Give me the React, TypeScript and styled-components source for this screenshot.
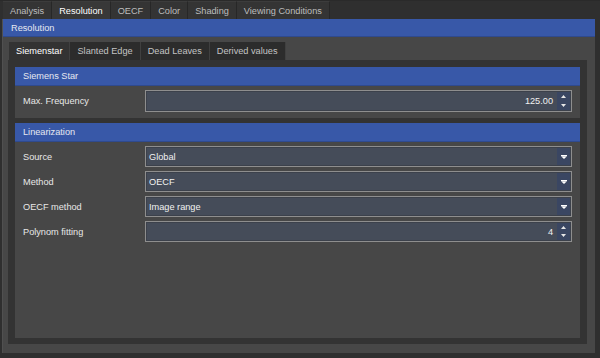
import React from 'react';
import styled, { createGlobalStyle } from 'styled-components';

const GlobalStyle = createGlobalStyle`
  html, body {
    margin: 0;
    padding: 0;
    background: #2f2f2f;
  }
  body {
    font-family: 'Liberation Sans', Arial, sans-serif;
    font-size: 9.2px;
    color: #dcdcdc;
  }
`;

const Window = styled.div`
  width: 600px;
  height: 358px;
  display: flex;
  flex-direction: column;
  background: #2f2f2f;
  overflow: hidden;
`;

const TopTabBar = styled.div`
  height: 19px;
  display: flex;
  align-items: flex-end;
  padding-left: 3px;
  border-top: 1px solid #2a2a2a;
  box-sizing: border-box;
`;

const TopTab = styled.div<{ $active?: boolean }>`
  height: 18px;
  padding: 0 7px;
  display: flex;
  align-items: center;
  box-sizing: border-box;
  background: ${(p) => (p.$active ? '#383838' : '#343434')};
  color: ${(p) => (p.$active ? '#ffffff' : '#bdbdbd')};
  border-right: 1px solid #272727;
  border-top: 1px solid #3c3c3c;
`;

const MainPanel = styled.div`
  flex: 1;
  margin: 0 5px 5px 2px;
  display: flex;
  flex-direction: column;
  background: #474747;
  border-left: 1px solid #505050;
`;

const BlueTitle = styled.div<{ $height: number; $indent: number }>`
  height: ${(p) => p.$height}px;
  flex-shrink: 0;
  display: flex;
  align-items: center;
  padding-left: ${(p) => p.$indent}px;
  background: #3858a8;
  color: #e6e8f0;
  border-bottom: 1px solid #2f4a8e;
  box-sizing: border-box;
`;

const PanelBody = styled.div`
  flex: 1;
  display: flex;
  flex-direction: column;
  padding: 5px 8px 9px 5px;
`;

const SubTabBar = styled.div`
  height: 18px;
  display: flex;
  padding-left: 1px;
`;

const SubTab = styled.div<{ $active?: boolean }>`
  height: 18px;
  padding: 0 7px;
  display: flex;
  align-items: center;
  box-sizing: border-box;
  background: ${(p) => (p.$active ? '#333333' : '#2c2c2c')};
  color: ${(p) => (p.$active ? '#ffffff' : '#c4c4c4')};
  border-right: 1px solid #404040;
`;

const Frame = styled.div`
  flex: 1;
  display: flex;
  flex-direction: column;
  gap: 5px;
  background: #333333;
  padding: 7px 7px 6px 7px;
`;

const GroupBox = styled.div<{ $grow?: boolean }>`
  display: flex;
  flex-direction: column;
  background: #474747;
  flex: ${(p) => (p.$grow ? 1 : '0 0 auto')};
`;

const GroupBody = styled.div<{ $pad: string }>`
  display: flex;
  flex-direction: column;
  gap: 4px;
  padding: ${(p) => p.$pad};
`;

const Row = styled.div`
  display: flex;
  align-items: center;
`;

const Label = styled.div`
  width: 122px;
  flex-shrink: 0;
  color: #e8e8e8;
`;

const Field = styled.div<{ $height: number }>`
  flex: 1;
  height: ${(p) => p.$height}px;
  display: flex;
  align-items: stretch;
  box-sizing: border-box;
  border: 1px solid #8e8e8e;
  box-shadow: inset 0 0 0 1px #3c414b;
  background: #454c59;
  color: #f2f2f2;
`;

const FieldText = styled.div<{ $right?: boolean }>`
  flex: 1;
  display: flex;
  align-items: center;
  justify-content: ${(p) => (p.$right ? 'flex-end' : 'flex-start')};
  padding: 0 4px 0 3px;
`;

const SideButton = styled.div`
  width: 13px;
  margin: 1px 1px 1px 0;
  display: flex;
  flex-direction: column;
  align-items: center;
  justify-content: center;
  background: #3a4662;
`;

const SpinHalf = styled.div`
  flex: 1;
  display: flex;
  align-items: center;
  justify-content: center;
`;

const ComboArrow = () => (
  <svg width="6" height="4" viewBox="0 0 6 4">
    <rect x="0" y="0" width="6" height="1" fill="#ffffff" />
    <polygon points="0,1.3 6,1.3 3,4" fill="#ffffff" />
  </svg>
);

const SpinArrow = ({ up }: { up?: boolean }) => (
  <svg width="5" height="3" viewBox="0 0 5 3">
    <polygon points={up ? '0,3 5,3 2.5,0' : '0,0 5,0 2.5,3'} fill="#e8e8e8" />
  </svg>
);

const ComboBox = ({ value }: { value: string }) => (
  <Field $height={21}>
    <FieldText>{value}</FieldText>
    <SideButton>
      <ComboArrow />
    </SideButton>
  </Field>
);

const SpinBox = ({ value, height }: { value: string; height: number }) => (
  <Field $height={height}>
    <FieldText $right>{value}</FieldText>
    <SideButton>
      <SpinHalf>
        <SpinArrow up />
      </SpinHalf>
      <SpinHalf>
        <SpinArrow />
      </SpinHalf>
    </SideButton>
  </Field>
);

const topTabs = ['Analysis', 'Resolution', 'OECF', 'Color', 'Shading', 'Viewing Conditions'];
const subTabs = ['Siemenstar', 'Slanted Edge', 'Dead Leaves', 'Derived values'];

const App = (): JSX.Element => (
  <>
    <GlobalStyle />
    <Window>
      <TopTabBar>
        {topTabs.map((t) => (
          <TopTab key={t} $active={t === 'Resolution'}>
            {t}
          </TopTab>
        ))}
      </TopTabBar>
      <MainPanel>
        <BlueTitle $height={18} $indent={8}>
          Resolution
        </BlueTitle>
        <PanelBody>
          <SubTabBar>
            {subTabs.map((t) => (
              <SubTab key={t} $active={t === 'Siemenstar'}>
                {t}
              </SubTab>
            ))}
          </SubTabBar>
          <Frame>
            <GroupBox>
              <BlueTitle $height={19} $indent={8}>
                Siemens Star
              </BlueTitle>
              <GroupBody $pad="4px 8px 6px 8px">
                <Row>
                  <Label>Max. Frequency</Label>
                  <SpinBox value="125.00" height={22} />
                </Row>
              </GroupBody>
            </GroupBox>
            <GroupBox $grow>
              <BlueTitle $height={19} $indent={8}>
                Linearization
              </BlueTitle>
              <GroupBody $pad="4px 8px 4px 8px">
                <Row>
                  <Label>Source</Label>
                  <ComboBox value="Global" />
                </Row>
                <Row>
                  <Label>Method</Label>
                  <ComboBox value="OECF" />
                </Row>
                <Row>
                  <Label>OECF method</Label>
                  <ComboBox value="Image range" />
                </Row>
                <Row>
                  <Label>Polynom fitting</Label>
                  <SpinBox value="4" height={21} />
                </Row>
              </GroupBody>
            </GroupBox>
          </Frame>
        </PanelBody>
      </MainPanel>
    </Window>
  </>
);

export default App;
